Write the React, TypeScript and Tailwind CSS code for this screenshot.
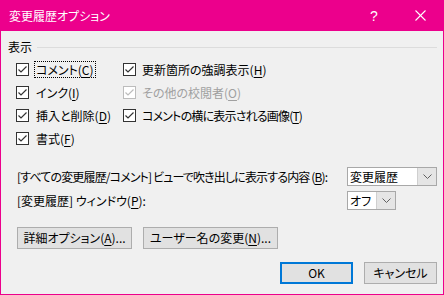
import React from "react";

const FONT = "font-['Noto_Sans_CJK_JP','Noto_Sans',sans-serif] [font-feature-settings:'palt']";

function Check({ disabled }: { disabled?: boolean }) {
  const c = disabled ? "#bcbcbc" : "#333333";
  return (
    <div
      className={`w-[13px] h-[13px] shrink-0 border bg-white flex items-center justify-center ${disabled ? "border-[#bcbcbc]" : "border-[#333333]"}`}
    >
      <svg width="11" height="11" viewBox="0 0 11 11">
        <polyline points="1.5,5.5 4,8 9.5,2.5" fill="none" stroke={c} strokeWidth="1.2" />
      </svg>
    </div>
  );
}

function U({ children }: { children: React.ReactNode }) {
  return <span className="underline underline-offset-2 decoration-1">{children}</span>;
}

function Row({
  children,
  disabled,
  gap,
  track,
}: {
  children: React.ReactNode;
  disabled?: boolean;
  gap: string;
  track?: string;
}) {
  return (
    <div className={`h-[23px] flex items-center ${gap}`}>
      <Check disabled={disabled} />
      <span className={`whitespace-nowrap leading-[16px] ${track ?? ""} ${disabled ? "text-[#a0a0a0]" : "text-black"}`}>{children}</span>
    </div>
  );
}

function Chevron() {
  return (
    <svg width="9" height="5" viewBox="0 0 9 5">
      <polyline points="0.5,0.5 4.5,4.5 8.5,0.5" fill="none" stroke="#606060" strokeWidth="1" />
    </svg>
  );
}

function Combo({ text, w }: { text: string; w: string }) {
  return (
    <div className={`h-[19px] ${w} shrink-0 flex border border-[#a8a8a8] bg-white`}>
      <div className="flex-1 flex items-center pl-[2px] text-black leading-none whitespace-nowrap">{text}</div>
      <div className="w-[19px] h-full bg-[#e5e5e5] border-l border-[#cfcfcf] flex items-center justify-center">
        <Chevron />
      </div>
    </div>
  );
}

function Btn({ children, w, primary }: { children: React.ReactNode; w: string; primary?: boolean }) {
  return (
    <div
      className={`h-[22px] ${w} flex items-center justify-center bg-[#e1e1e1] whitespace-nowrap text-black ${
        primary ? "border-2 border-[#0078d7]" : "border border-[#adadad]"
      }`}
    >
      {children}
    </div>
  );
}

export default function App() {
  return (
    <div className={`w-[444px] h-[295px] bg-[#f0f0f0] border-x border-b border-[#ec008c] flex flex-col text-[12px] ${FONT}`}>
      <div className="h-[31px] shrink-0 bg-[#ec008c] flex items-center text-white pl-[8px]">
        <span className="flex-1 leading-none">変更履歴オプション</span>
        <span className="w-[46px] text-center text-[14px] leading-none ml-[4px] font-['Liberation_Sans',sans-serif]">?</span>
        <div className="w-[46px] flex justify-center">
          <svg width="11" height="11" viewBox="0 0 11 11">
            <line x1="0.5" y1="0.5" x2="10.5" y2="10.5" stroke="white" strokeWidth="1.1" />
            <line x1="10.5" y1="0.5" x2="0.5" y2="10.5" stroke="white" strokeWidth="1.1" />
          </svg>
        </div>
      </div>

      <div className="mt-[8px] h-[16px] flex items-center pl-[7px] pr-[6px]">
        <span className="leading-none text-black">表示</span>
        <div className="flex-1 ml-[5px] h-px bg-[#dcdcdc]" />
      </div>

      <div className="mt-[3px] pl-[15px] flex">
        <div className="w-[107px] flex flex-col">
          <div className="h-[23px] flex items-center gap-[5px]">
            <Check />
            <span className="whitespace-nowrap leading-[15px] border border-dotted border-black px-[1px]">
              コメント(<U>C</U>)
            </span>
          </div>
          <Row gap="gap-[7px]">
            インク(<U>I</U>)
          </Row>
          <Row gap="gap-[7px]">
            挿入と削除(<U>D</U>)
          </Row>
          <Row gap="gap-[7px]">
            書式(<U>F</U>)
          </Row>
        </div>
        <div className="flex flex-col">
          <Row gap="gap-[6px]">
            更新箇所の強調表示(<U>H</U>)
          </Row>
          <Row gap="gap-[6px]" disabled>
            その他の校閲者(<U>O</U>)
          </Row>
          <Row gap="gap-[6px]" track="tracking-[-0.8px]">
            コメントの横に表示される画像(<U>T</U>)
          </Row>
        </div>
      </div>

      <div className="mt-[17px] pl-[16px] flex items-center h-[19px]">
        <span className="w-[330px] shrink-0 whitespace-nowrap text-black leading-none tracking-[-0.85px]">
          [すべての変更履歴/コメント] ビューで吹き出しに表示する内容 (<U>B</U>):
        </span>
        <Combo text="変更履歴" w="w-[90px]" />
      </div>
      <div className="mt-[5px] pl-[16px] flex items-center h-[19px]">
        <span className="w-[330px] shrink-0 whitespace-nowrap text-black leading-none">
          [変更履歴] ウィンドウ(<U>P</U>):
        </span>
        <Combo text="オフ" w="w-[49px]" />
      </div>

      <div className="mt-[17px] pl-[16px] flex gap-[11px]">
        <Btn w="w-[115px]">
          詳細オプション(<U>A</U>)...
        </Btn>
        <Btn w="w-[135px]">
          ユーザー名の変更(<U>N</U>)...
        </Btn>
      </div>

      <div className="mt-[13px] pr-[6px] flex justify-end gap-[11px]">
        <Btn w="w-[73px]" primary>
          OK
        </Btn>
        <Btn w="w-[73px]">キャンセル</Btn>
      </div>
    </div>
  );
}
